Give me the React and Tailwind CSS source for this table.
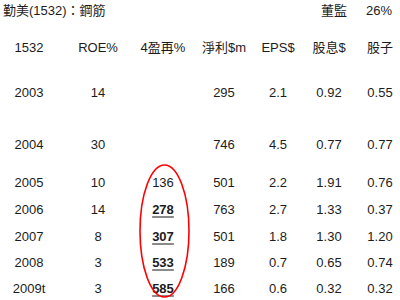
import React from 'react';

const cols = 'grid grid-cols-[58px_80px_50px_72px_36px_66px_36px] items-center text-center';

const rows = [
  { y: '2003', roe: '14', re: '', np: '295', eps: '2.1', div: '0.92', st: '0.55', mt: 'mt-[19px]' },
  { y: '2004', roe: '30', re: '', np: '746', eps: '4.5', div: '0.77', st: '0.77', mt: 'mt-[26px]' },
  { y: '2005', roe: '10', re: '136', np: '501', eps: '2.2', div: '1.91', st: '0.76', mt: 'mt-[12px]' },
  { y: '2006', roe: '14', re: '278', bold: true, np: '763', eps: '2.7', div: '1.33', st: '0.37', mt: 'mt-[1px]' },
  { y: '2007', roe: '8', re: '307', bold: true, np: '501', eps: '1.8', div: '1.30', st: '1.20', mt: 'mt-[1px]' },
  { y: '2008', roe: '3', re: '533', bold: true, np: '189', eps: '0.7', div: '0.65', st: '0.74', mt: 'mt-0' },
  { y: '2009t', roe: '3', re: '585', bold: true, np: '166', eps: '0.6', div: '0.32', st: '0.32', mt: 'mt-0' },
];

export default function App() {
  return (
    <div
      className="relative w-[400px] h-[300px] overflow-hidden bg-white text-[13px] text-[#1c1c1c]"
      style={{ fontFamily: '"Liberation Sans", Arial, "Noto Sans CJK TC", sans-serif' }}
    >
      {/* title */}
      <div className="flex items-center justify-between h-[22px] pl-[3px] pr-[8px]">
        <span>勤美(1532)：鋼筋</span>
        <div className="flex items-center gap-[19px]">
          <span>董監</span>
          <span>26%</span>
        </div>
      </div>

      {/* header */}
      <div className={`${cols} h-[26px] mt-[13px]`}>
        <span>1532</span>
        <span>ROE%</span>
        <span>4盈再%</span>
        <span>淨利$m</span>
        <span>EPS$</span>
        <span>股息$</span>
        <span>股子</span>
      </div>

      {rows.map((r) => (
        <div key={r.y} className={`${cols} h-[26px] ${r.mt}`}>
          <span>{r.y}</span>
          <span>{r.roe}</span>
          <span>
            {r.bold ? (
              <span className="font-bold underline decoration-[#8a8a8a] decoration-2 underline-offset-2">
                {r.re}
              </span>
            ) : (
              r.re
            )}
          </span>
          <span>{r.np}</span>
          <span>{r.eps}</span>
          <span>{r.div}</span>
          <span>{r.st}</span>
        </div>
      ))}

      {/* red ellipse */}
      <svg className="absolute left-0 top-0 pointer-events-none" width="400" height="300">
        <ellipse cx="164.5" cy="231" rx="24.5" ry="66" fill="none" stroke="#ff0000" strokeWidth="1.6" />
      </svg>
    </div>
  );
}
